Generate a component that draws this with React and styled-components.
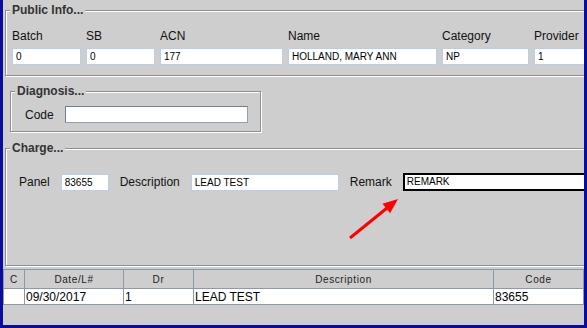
import styled, { createGlobalStyle } from "styled-components";

const GlobalStyle = createGlobalStyle`
  html, body {
    margin: 0;
    padding: 0;
    background: #cecece;
  }
  * {
    box-sizing: border-box;
  }
`;

const publicFields = [
  { label: "Batch", value: "0", width: 69 },
  { label: "SB", value: "0", width: 69 },
  { label: "ACN", value: "177", width: 123 },
  { label: "Name", value: "HOLLAND, MARY ANN", width: 149 },
  { label: "Category", value: "NP", width: 87 },
  { label: "Provider", value: "1", width: 110 },
];

const columns = [
  { title: "C", width: 21 },
  { title: "Date/L#", width: 99 },
  { title: "Dr", width: 70 },
  { title: "Description", width: 300 },
  { title: "Code", width: 90 },
];

const rows = [["", "09/30/2017", "1", "LEAD TEST", "83655"]];

function Group({ title, children, ...rest }) {
  return (
    <GroupBox {...rest}>
      <Legend>{title}</Legend>
      {children}
    </GroupBox>
  );
}

function Arrow() {
  return (
    <ArrowMark width="58" height="50" viewBox="0 0 58 50">
      <line x1="5" y1="43" x2="42" y2="13" stroke="#f00" strokeWidth="3" />
      <polygon points="53,4 45.1,18.2 37.5,8.8" fill="#f00" />
    </ArrowMark>
  );
}

export default function App() {
  return (
    <>
      <GlobalStyle />
      <Frame>
        <PublicGroup title="Public Info...">
          <FieldRow>
            {publicFields.map((f) => (
              <Field key={f.label} style={{ width: f.width }}>
                <Label>{f.label}</Label>
                <TextBox>{f.value}</TextBox>
              </Field>
            ))}
          </FieldRow>
        </PublicGroup>

        <DiagnosisGroup title="Diagnosis...">
          <InlineRow>
            <Label>Code</Label>
            <CodeBox />
          </InlineRow>
        </DiagnosisGroup>

        <ChargeGroup title="Charge...">
          <InlineRow>
            <Label>Panel</Label>
            <TextBox $w={48}>83655</TextBox>
            <Label $pad={11}>Description</Label>
            <TextBox $w={148}>LEAD TEST</TextBox>
            <Label $pad={10}>Remark</Label>
            <FocusBox>REMARK</FocusBox>
          </InlineRow>
          <Arrow />
        </ChargeGroup>

        <Grid>
          <colgroup>
            {columns.map((c) => (
              <col key={c.title} style={{ width: c.width }} />
            ))}
          </colgroup>
          <thead>
            <tr>
              {columns.map((c) => (
                <HeadCell key={c.title}>{c.title}</HeadCell>
              ))}
            </tr>
          </thead>
          <tbody>
            {rows.map((r, i) => (
              <tr key={i}>
                {r.map((v, j) => (
                  <Cell key={j}>{v}</Cell>
                ))}
              </tr>
            ))}
          </tbody>
        </Grid>
      </Frame>
    </>
  );
}

const Frame = styled.div`
  width: 587px;
  height: 328px;
  overflow: hidden;
  display: flex;
  flex-direction: column;
  background: #cecece;
  border-left: 3px solid #0b0b9e;
  border-right: 3px solid #0b0b9e;
  border-bottom: 3px solid #0b0b9e;
  font-family: "Liberation Sans", Arial, sans-serif;
  color: #000;
`;

const GroupBox = styled.div`
  position: relative;
  flex-shrink: 0;
  border: 1px solid #8e8e8e;
  box-shadow: inset 1px 1px 0 #fff, 1px 1px 0 #fff;
`;

const Legend = styled.span`
  position: absolute;
  top: -7px;
  left: 4px;
  padding: 0 2px;
  background: #cecece;
  font-size: 12px;
  line-height: 12px;
  font-weight: bold;
  color: #333;
`;

const PublicGroup = styled(Group)`
  margin: 10px -20px 0 2px;
  height: 66px;
  padding: 18px 0 0 6px;
`;

const DiagnosisGroup = styled(Group)`
  margin: 15px 0 0 7px;
  width: 251px;
  height: 41px;
  padding: 14px 0 0 14px;
`;

const ChargeGroup = styled(Group)`
  margin: 16px -20px 0 2px;
  height: 118px;
  padding: 24px 0 0 13px;
`;

const FieldRow = styled.div`
  display: flex;
  gap: 5px;
`;

const Field = styled.div`
  display: flex;
  flex-direction: column;
  gap: 5px;
  flex-shrink: 0;
`;

const InlineRow = styled.div`
  display: flex;
  align-items: center;
  gap: 11px;
`;

const Label = styled.span`
  font-size: 12px;
  line-height: 14px;
  color: #111;
  white-space: nowrap;
  padding-left: ${({ $pad }) => ($pad ? $pad - 11 : 0)}px;
`;

const TextBox = styled.div`
  flex-shrink: 0;
  width: ${({ $w }) => ($w ? `${$w}px` : "100%")};
  height: 17px;
  padding: 0 3px;
  background: #fff;
  border: 1px solid #b8cfe5;
  font-size: 10px;
  line-height: 15px;
  white-space: nowrap;
  overflow: hidden;
`;

const CodeBox = styled.div`
  width: 183px;
  height: 17px;
  background: #fff;
  border: 1px solid #8da0b4;
  border-top-color: #6d7f91;
  border-left-color: #6d7f91;
`;

const FocusBox = styled.div`
  flex-shrink: 0;
  width: 220px;
  height: 18px;
  padding: 0 2px;
  background: #fff;
  border: 2px solid #000;
  font-size: 10px;
  line-height: 14px;
`;

const ArrowMark = styled.svg`
  position: absolute;
  left: 339px;
  top: 46px;
`;

const Grid = styled.table`
  margin-top: 3px;
  width: 580px;
  border-collapse: collapse;
  table-layout: fixed;
`;

const HeadCell = styled.th`
  height: 19px;
  padding: 0;
  border: 1px solid #8c99a6;
  background: #cecece;
  font-size: 10px;
  font-weight: normal;
  letter-spacing: 0.6px;
  color: #222;
  text-align: center;
`;

const Cell = styled.td`
  height: 16px;
  padding: 0 0 0 1px;
  border: 1px solid #8c99a6;
  background: #fff;
  font-size: 12px;
  line-height: 14px;
  white-space: nowrap;
  overflow: hidden;
`;
